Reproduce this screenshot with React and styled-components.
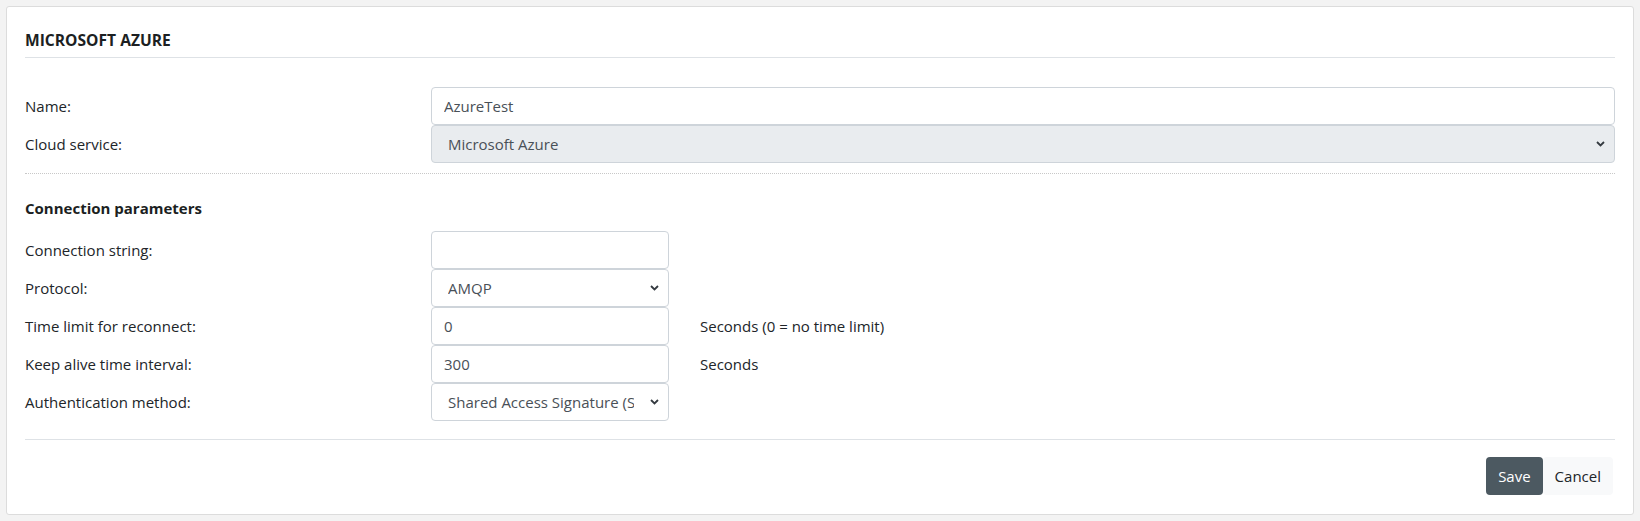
import React, { useState } from 'react';
import styled, { createGlobalStyle } from 'styled-components';

const GlobalStyle = createGlobalStyle`
  body {
    margin: 0;
    background: #f3f3f3;
    font-family: 'Open Sans', 'Noto Sans', sans-serif;
    font-size: 15px;
    color: #212529;
  }
`;

const Page = styled.div`
  padding: 6px 6px 7px 6px;
`;

const Card = styled.div`
  background: #fff;
  border: 1px solid #dcdcdc;
  border-radius: 3px;
  padding: 21px 18px 19px 18px;
`;

const Title = styled.h2`
  margin: 0;
  font-size: 15.6px;
  font-weight: 700;
  line-height: 20px;
  padding: 2px 0 7px 0;
  border-bottom: 1px solid #dee2e6;
  text-transform: uppercase;
  color: #1c1f22;
`;

const Section = styled.div`
  display: grid;
  grid-template-columns: 406px ${(p) => p.$field || '1fr'} auto;
  align-items: center;
  padding-top: ${(p) => p.$top || 0}px;
  padding-bottom: ${(p) => p.$bottom || 0}px;
  border-bottom: ${(p) => p.$divider || 'none'};
`;

const Label = styled.label`
  grid-column: 1;
  line-height: 38px;
`;

const Suffix = styled.span`
  padding-left: 31px;
`;

const Input = styled.input`
  box-sizing: border-box;
  height: 38px;
  width: 100%;
  padding: 0 12px;
  border: 1px solid #ced4da;
  border-radius: 4px;
  font-family: inherit;
  font-size: 15px;
  color: #495057;
  background: #fff;
  outline: none;
`;

const chevron =
  "url(\"data:image/svg+xml;utf8,<svg xmlns='http://www.w3.org/2000/svg' width='9' height='6' viewBox='0 0 9 6'><path d='M1 1l3.5 3.5L8 1' fill='none' stroke='%23343a40' stroke-width='1.8'/></svg>\")";

const Select = styled.select`
  box-sizing: border-box;
  height: 38px;
  width: 100%;
  padding: 0 34px 0 16px;
  border: 1px solid #ced4da;
  border-radius: 4px;
  font-family: inherit;
  font-size: 15px;
  color: #495057;
  background: ${(p) => (p.disabled ? '#e9ecef' : '#fff')} ${chevron} no-repeat right 9px center;
  appearance: none;
  opacity: 1;
  outline: none;
  text-overflow: clip;
`;

const SubTitle = styled.h3`
  grid-column: 1 / -1;
  margin: 0 0 13px 0;
  font-size: 15px;
  font-weight: 700;
  line-height: 20px;
  color: #1c1f22;
`;

const Footer = styled.div`
  display: flex;
  justify-content: flex-end;
  padding: 17px 2px 0 0;
`;

const Button = styled.button`
  height: 38px;
  padding: 0 12px;
  border: none;
  border-radius: 4px;
  font-family: inherit;
  font-size: 15px;
  cursor: pointer;
  background: ${(p) => (p.$primary ? '#4c5961' : '#f8f9fa')};
  color: ${(p) => (p.$primary ? '#fff' : '#212529')};
`;

const App = () => {
  const [name, setName] = useState('AzureTest');
  const [conn, setConn] = useState('');
  const [limit, setLimit] = useState('0');
  const [keepAlive, setKeepAlive] = useState('300');

  return (
    <Page>
      <GlobalStyle />
      <Card>
        <Title>Microsoft Azure</Title>
        <Section $top={29} $bottom={10} $divider="1px dotted #c8c8c8">
          <Label>Name:</Label>
          <Input value={name} onChange={(e) => setName(e.target.value)} />
          <span />
          <Label>Cloud service:</Label>
          <Select disabled defaultValue="azure">
            <option value="azure">Microsoft Azure</option>
          </Select>
          <span />
        </Section>
        <Section $field="238px" $top={24} $bottom={18} $divider="1px solid #dee2e6">
          <SubTitle>Connection parameters</SubTitle>
          <Label>Connection string:</Label>
          <Input value={conn} onChange={(e) => setConn(e.target.value)} />
          <span />
          <Label>Protocol:</Label>
          <Select defaultValue="amqp">
            <option value="amqp">AMQP</option>
            <option value="mqtt">MQTT</option>
            <option value="https">HTTPS</option>
          </Select>
          <span />
          <Label>Time limit for reconnect:</Label>
          <Input value={limit} onChange={(e) => setLimit(e.target.value)} />
          <Suffix>Seconds (0 = no time limit)</Suffix>
          <Label>Keep alive time interval:</Label>
          <Input value={keepAlive} onChange={(e) => setKeepAlive(e.target.value)} />
          <Suffix>Seconds</Suffix>
          <Label>Authentication method:</Label>
          <Select defaultValue="sas">
            <option value="sas">Shared Access Signature (SAS)</option>
            <option value="x509">X.509 certificate</option>
          </Select>
          <span />
        </Section>
        <Footer>
          <Button $primary>Save</Button>
          <Button>Cancel</Button>
        </Footer>
      </Card>
    </Page>
  );
};

export default App;
